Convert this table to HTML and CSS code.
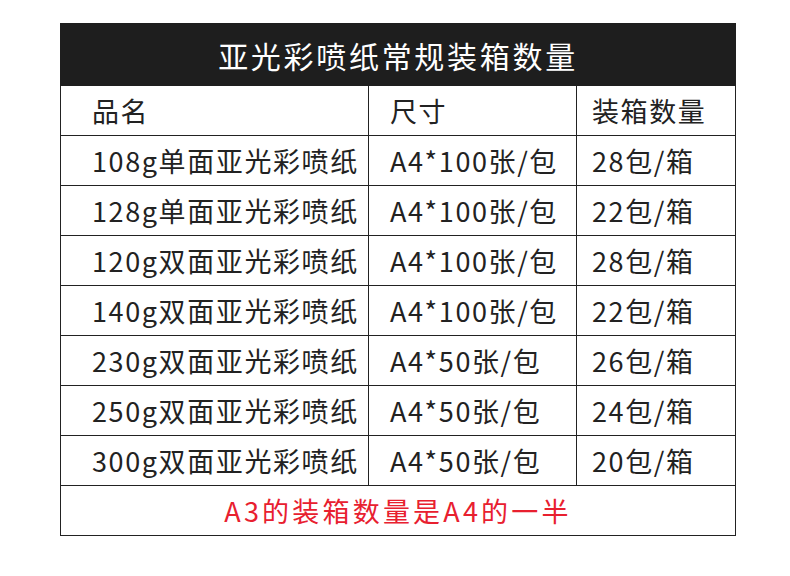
FILE: index.html
```html
<!DOCTYPE html>
<html lang="zh">
<head>
<meta charset="utf-8">
<link rel="stylesheet" href="styles.css">
</head>
<body>
<table class="pack">
  <colgroup>
    <col class="c1"><col class="c2"><col class="c3">
  </colgroup>
  <thead>
    <tr><th class="title" colspan="3">亚光彩喷纸常规装箱数量</th></tr>
  </thead>
  <tbody>
    <tr><td>品名</td><td>尺寸</td><td>装箱数量</td></tr>
    <tr><td>108g单面亚光彩喷纸</td><td>A4*100张/包</td><td>28包/箱</td></tr>
    <tr><td>128g单面亚光彩喷纸</td><td>A4*100张/包</td><td>22包/箱</td></tr>
    <tr><td>120g双面亚光彩喷纸</td><td>A4*100张/包</td><td>28包/箱</td></tr>
    <tr><td>140g双面亚光彩喷纸</td><td>A4*100张/包</td><td>22包/箱</td></tr>
    <tr><td>230g双面亚光彩喷纸</td><td>A4*50张/包</td><td>26包/箱</td></tr>
    <tr><td>250g双面亚光彩喷纸</td><td>A4*50张/包</td><td>24包/箱</td></tr>
    <tr><td>300g双面亚光彩喷纸</td><td>A4*50张/包</td><td>20包/箱</td></tr>
    <tr><td class="note" colspan="3">A3的装箱数量是A4的一半</td></tr>
  </tbody>
</table>
</body>
</html>
```
FILE: styles.css
```css
html, body {
  margin: 0;
  padding: 0;
  background: #ffffff;
}
body {
  font-family: "Noto Sans CJK SC", "Noto Sans", sans-serif;
  color: #222222;
}
.pack {
  margin: 23px 0 0 60px;
  width: 675px;
  border-collapse: collapse;
  table-layout: fixed;
}
.c1 { width: 308px; }
.c2 { width: 208px; }
.c3 { width: 159px; }
.pack th.title {
  background: #1e1e1e;
  color: #ffffff;
  height: 61px;
  padding: 0;
  font-size: 30px;
  font-weight: 400;
  letter-spacing: 2.7px;
  text-align: center;
  border: 1.5px solid #1e1e1e;
}
.pack td {
  height: 50px;
  padding: 0 0 0 15px;
  border: 1.5px solid #222222;
  font-size: 27px;
  letter-spacing: 1.6px;
  line-height: 1;
  white-space: nowrap;
  box-sizing: border-box;
}
.pack td:first-child {
  padding-left: 31px;
}
.pack td:nth-child(2) {
  padding-left: 21px;
}
.pack td.note {
  padding: 0;
  text-align: center;
  color: #e8202f;
  letter-spacing: 3.2px;
}
```
